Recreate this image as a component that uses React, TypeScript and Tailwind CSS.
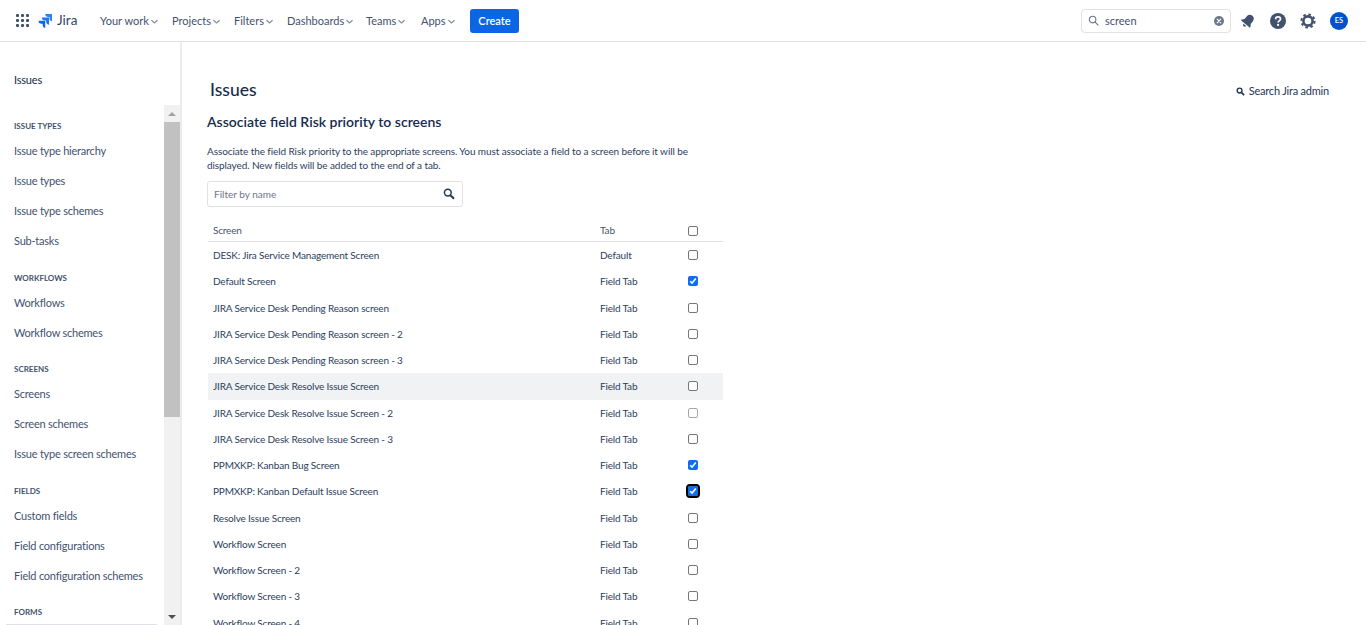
import React from "react";

function Chevron() {
  return (
    <svg width="9" height="9" viewBox="0 0 10 10" className="ml-[1px] mt-[1px]" fill="none" stroke="#8993a4" strokeWidth="1.4" strokeLinecap="round" strokeLinejoin="round">
      <path d="M2 3.8 5 6.6 8 3.8" />
    </svg>
  );
}

function NavItem({ label, w }: { label: string; w: string }) {
  return (
    <div className={`flex items-center text-[#42526e] text-[11px] ${w}`}>
      <span className="pt-[2px]">{label}</span>
      <Chevron />
    </div>
  );
}

function Box({ checked, focus, dim }: { checked?: boolean; focus?: boolean; dim?: boolean }) {
  if (checked) {
    return (
      <span className={`flex h-[10px] w-[10px] items-center justify-center rounded-[2px] bg-[#0f6fe8] ${focus ? "outline-2 outline-black" : ""}`}>
        <svg width="8" height="8" viewBox="0 0 8 8" fill="none" stroke="white" strokeWidth="1.6">
          <path d="M1.2 4.2 3.1 6.1 6.8 1.6" />
        </svg>
      </span>
    );
  }
  return <span className={`block h-[10px] w-[10px] rounded-[2px] border ${dim ? "border-[#a8a8a8]" : "border-[#767676]"} bg-white`} />;
}

const sections = [
  { title: "ISSUE TYPES", pt: "pt-[15px]", items: ["Issue type hierarchy", "Issue types", "Issue type schemes", "Sub-tasks"] },
  { title: "WORKFLOWS", pt: "pt-[16px]", items: ["Workflows", "Workflow schemes"] },
  { title: "SCREENS", pt: "pt-[15px]", items: ["Screens", "Screen schemes", "Issue type screen schemes"] },
  { title: "FIELDS", pt: "pt-[16px]", items: ["Custom fields", "Field configurations", "Field configuration schemes"] },
];

const rows: { name: string; tab: string; checked?: boolean; focus?: boolean; hover?: boolean }[] = [
  { name: "DESK: Jira Service Management Screen", tab: "Default" },
  { name: "Default Screen", tab: "Field Tab", checked: true },
  { name: "JIRA Service Desk Pending Reason screen", tab: "Field Tab" },
  { name: "JIRA Service Desk Pending Reason screen - 2", tab: "Field Tab" },
  { name: "JIRA Service Desk Pending Reason screen - 3", tab: "Field Tab" },
  { name: "JIRA Service Desk Resolve Issue Screen", tab: "Field Tab", hover: true },
  { name: "JIRA Service Desk Resolve Issue Screen - 2", tab: "Field Tab" },
  { name: "JIRA Service Desk Resolve Issue Screen - 3", tab: "Field Tab" },
  { name: "PPMXKP: Kanban Bug Screen", tab: "Field Tab", checked: true },
  { name: "PPMXKP: Kanban Default Issue Screen", tab: "Field Tab", checked: true, focus: true },
  { name: "Resolve Issue Screen", tab: "Field Tab" },
  { name: "Workflow Screen", tab: "Field Tab" },
  { name: "Workflow Screen - 2", tab: "Field Tab" },
  { name: "Workflow Screen - 3", tab: "Field Tab" },
  { name: "Workflow Screen - 4", tab: "Field Tab" },
];

const nav: [string, string][] = [
  ["Your work", "w-[72px]"],
  ["Projects", "w-[62px]"],
  ["Filters", "w-[53px]"],
  ["Dashboards", "w-[79px]"],
  ["Teams", "w-[55px]"],
  ["Apps", "w-[49px]"],
];

export default function App() {
  return (
    <div className="flex h-[625px] flex-col overflow-hidden bg-white font-['Lato',sans-serif] text-[#172b4d]">
      <header className="flex h-[42px] shrink-0 items-center border-b border-[#dfe1e6] pl-[16px] pr-[18px]">
        <div className="grid h-[13px] w-[13px] grid-cols-3 gap-[2px]">
          {Array.from({ length: 9 }).map((_, i) => (
            <span key={i} className="h-[3px] w-[3px] rounded-[1px] bg-[#42526e]" />
          ))}
        </div>
        <svg className="ml-[9px]" width="15" height="15" viewBox="0 0 15 15">
          <path d="M14 1H7.2c0 1.7 1.4 3 3 3h1.3v1.2c0 1.7 1.3 3 2.5 3V1z" fill="#2684ff" />
          <path d="M10.6 4.4H3.8c0 1.7 1.4 3 3 3h1.3v1.3c0 1.6 1.3 3 3 3V4.4z" fill="#1d78f2" />
          <path d="M7.2 7.8H.5c0 1.7 1.3 3 3 3h1.2V12c0 1.7 1.4 3 2.5 3V7.8z" fill="#0c66e4" />
        </svg>
        <span className="ml-[4px] w-[31px] text-[13.5px] text-[#344563]">Jira</span>
        <div className="ml-[12px] flex items-center">
          {nav.map(([n, w]) => (
            <NavItem key={n} label={n} w={w} />
          ))}
        </div>
        <button className="flex h-[24px] w-[49px] items-center justify-center rounded-[3px] bg-[#0c66e4] pt-[2px] text-[11px] font-semibold text-white">
          Create
        </button>
        <div className="ml-auto flex h-[24px] w-[150px] items-center rounded-[4px] border border-[#dfe1e6] px-[6px]">
          <svg width="11" height="11" viewBox="0 0 12 12" fill="none" stroke="#6b778c" strokeWidth="1.2">
            <circle cx="5" cy="5" r="3.6" />
            <path d="M7.8 7.8 11 11" strokeLinecap="round" />
          </svg>
          <span className="ml-[6px] flex-1 pt-[2px] text-[11px] text-[#42526e]">screen</span>
          <svg width="10" height="10" viewBox="0 0 10 10">
            <circle cx="5" cy="5" r="5" fill="#6b778c" />
            <path d="M3.2 3.2 6.8 6.8M6.8 3.2 3.2 6.8" stroke="white" strokeWidth="1.2" strokeLinecap="round" />
          </svg>
        </div>
        <svg className="ml-[9px]" width="16" height="16" viewBox="0 0 16 16" fill="#42526e">
          <g transform="rotate(40 8 8)">
            <path d="M8 1.2c-2.4 0-4 1.8-4 4.2v3.2L2.2 11v1h11.6v-1L12 8.6V5.4c0-2.4-1.6-4.2-4-4.2z" />
            <path d="M6.2 13h3.6c0 1-.8 1.8-1.8 1.8S6.2 14 6.2 13z" />
          </g>
        </svg>
        <svg className="ml-[14px]" width="16" height="16" viewBox="0 0 16 16">
          <circle cx="8" cy="8" r="8" fill="#42526e" />
          <path d="M5.6 6.2c0-1.4 1.1-2.3 2.5-2.3s2.4.9 2.4 2.1c0 1.9-2.4 1.8-2.4 3.5" fill="none" stroke="white" strokeWidth="1.7" />
          <circle cx="8.1" cy="11.9" r="1.1" fill="white" />
        </svg>
        <svg className="ml-[14px]" width="16" height="16" viewBox="0 0 16 16">
          <circle cx="8" cy="8" r="4.6" fill="none" stroke="#42526e" strokeWidth="2.6" />
          <circle cx="8" cy="8" r="6.6" fill="none" stroke="#42526e" strokeWidth="2" strokeDasharray="2.6 2.6" />
        </svg>
        <span className="ml-[14px] flex h-[18px] w-[18px] items-center justify-center rounded-full bg-[#0052cc] text-[7.5px] font-semibold text-white">
          ES
        </span>
      </header>

      <div className="flex min-h-0 flex-1">
        <aside className="flex w-[182px] shrink-0 flex-col border-r-[2px] border-[#ebecf0]">
          <div className="h-[63px] shrink-0 pl-[14px] pt-[30px] text-[11px] leading-[16px] tracking-[-0.2px] text-[#172b4d]">Issues</div>
          <div className="flex min-h-0 flex-1">
            <div className="w-[164px] shrink-0 overflow-hidden pl-[14px]">
              {sections.map((s) => (
                <div key={s.title} className={s.pt}>
                  <div className="h-[13px] text-[8px] font-bold leading-[13px] text-[#42526e]">{s.title}</div>
                  <div className="mt-[3px]">
                    {s.items.map((it) => (
                      <div key={it} className="flex h-[30px] items-center text-[11px] tracking-[-0.22px] text-[#42526e]">{it}</div>
                    ))}
                  </div>
                </div>
              ))}
              <div className="pt-[15px]">
                <div className="h-[13px] text-[8px] font-bold leading-[13px] text-[#42526e]">FORMS</div>
                <div className="-ml-[8px] mt-[5px] h-[1px] w-[151px] bg-[#dfe1e6]" />
              </div>
            </div>
            <div className="flex w-[16px] shrink-0 flex-col bg-[#f1f1f1]">
              <div className="flex h-[17px] shrink-0 items-center justify-center">
                <span className="h-0 w-0 border-x-[4px] border-b-[4px] border-x-transparent border-b-[#a3a3a3]" />
              </div>
              <div className="h-[295px] w-full shrink-0 bg-[#c1c1c1]" />
              <div className="flex-1" />
              <div className="flex h-[17px] shrink-0 items-center justify-center">
                <span className="h-0 w-0 border-x-[4px] border-t-[4px] border-x-transparent border-t-[#505050]" />
              </div>
            </div>
          </div>
        </aside>

        <main className="min-w-0 flex-1 overflow-hidden pl-[25px] pr-[37px]">
          <div className="flex items-start justify-between pl-[3px] pt-[35px]">
            <h1 className="text-[17.5px] leading-[26px] font-medium text-[#172b4d]">Issues</h1>
            <div className="mt-[6px] flex items-center text-[11px] tracking-[-0.2px] text-[#253858]">
              <svg className="mr-[4px]" width="9" height="9" viewBox="0 0 10 10" fill="none" stroke="#253858" strokeWidth="1.5">
                <circle cx="4" cy="4" r="2.7" />
                <path d="M6 6 9 9" strokeWidth="2" />
              </svg>
              Search Jira admin
            </div>
          </div>
          <h2 className="mt-[9px] text-[14px] leading-[20px] font-semibold text-[#172b4d]">Associate field Risk priority to screens</h2>
          <p className="mt-[12px] w-[490px] text-[10px] leading-[14px] tracking-[-0.09px] text-[#2c3e5d]">
            Associate the field Risk priority to the appropriate screens. You must associate a field to a screen before it will be displayed. New fields will be added to the end of a tab.
          </p>
          <div className="mt-[9px] flex h-[26px] w-[256px] items-center justify-between rounded-[3px] border border-[#dfe1e6] pl-[6px] pr-[7px]">
            <span className="pt-[1px] text-[10px] text-[#6b778c]">Filter by name</span>
            <svg width="12" height="12" viewBox="0 0 12 12" fill="none" stroke="#253858" strokeWidth="1.5">
              <circle cx="4.8" cy="4.6" r="3.4" />
              <path d="M7.4 7.2 11 10.8" strokeWidth="2" />
            </svg>
          </div>
          <div className="ml-[1px] mt-[14px] w-[515px]">
            <div className="flex h-[21px] items-center border-b border-[#dfe1e6] pb-[1px] text-[10px] tracking-[-0.17px] text-[#44546f]">
              <span className="w-[392px] pl-[5px]">Screen</span>
              <span className="w-[88px]">Tab</span>
              <span className="flex items-center"><Box /></span>
            </div>
            {rows.map((r, i) => (
              <div key={r.name} className={`flex h-[26.25px] items-center text-[10px] tracking-[-0.17px] text-[#2c3e5d] ${r.hover ? "bg-[#f1f2f4]" : ""}`}>
                <span className="w-[392px] pl-[5px] pt-[1px]">{r.name}</span>
                <span className="w-[88px] pt-[1px]">{r.tab}</span>
                <span className="flex items-center">
                  <Box checked={r.checked} focus={r.focus} dim={i === 6} />
                </span>
              </div>
            ))}
          </div>
        </main>
      </div>
    </div>
  );
}
